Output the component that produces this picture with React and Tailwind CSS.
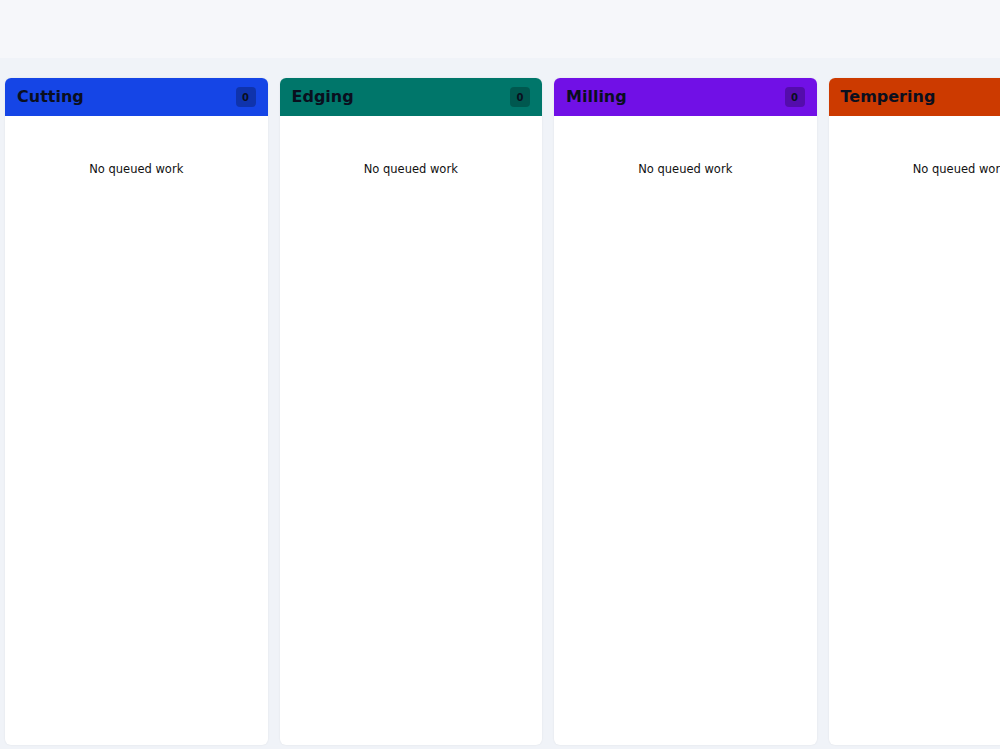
export default function App() {
  const cols = [
    ["Cutting", "bg-[#1545e6]"],
    ["Edging", "bg-[#00766a]"],
    ["Milling", "bg-[#7110e6]"],
    ["Tempering", "bg-[#cc3a00]"],
  ];
  return (
    <div className="h-[749px] w-[1000px] overflow-hidden bg-[#f0f3f8]" style={{ fontFamily: '"DejaVu Sans", sans-serif' }}>
      <div className="h-[58px] bg-[#f6f7fa]" />
      <div className="flex gap-[12px] pl-[5px] pt-[20px]">
        {cols.map(([name, bg]) => (
          <div key={name} className="flex h-[667px] w-[262.5px] shrink-0 flex-col overflow-hidden rounded-md bg-white shadow-[0_0_2px_rgba(0,0,0,0.08)]">
            <div className={`flex h-[38px] items-center justify-between px-[12px] ${bg}`}>
              <span className="text-[16px] font-bold text-[#0a0f1e]">{name}</span>
              <span className="flex h-[20px] w-[20px] items-center justify-center rounded bg-black/25 text-[10px] font-bold text-[#0a0f1e]">0</span>
            </div>
            <div className="pt-[45px] text-center text-[11.5px] text-[#111]">No queued work</div>
          </div>
        ))}
      </div>
    </div>
  );
}
